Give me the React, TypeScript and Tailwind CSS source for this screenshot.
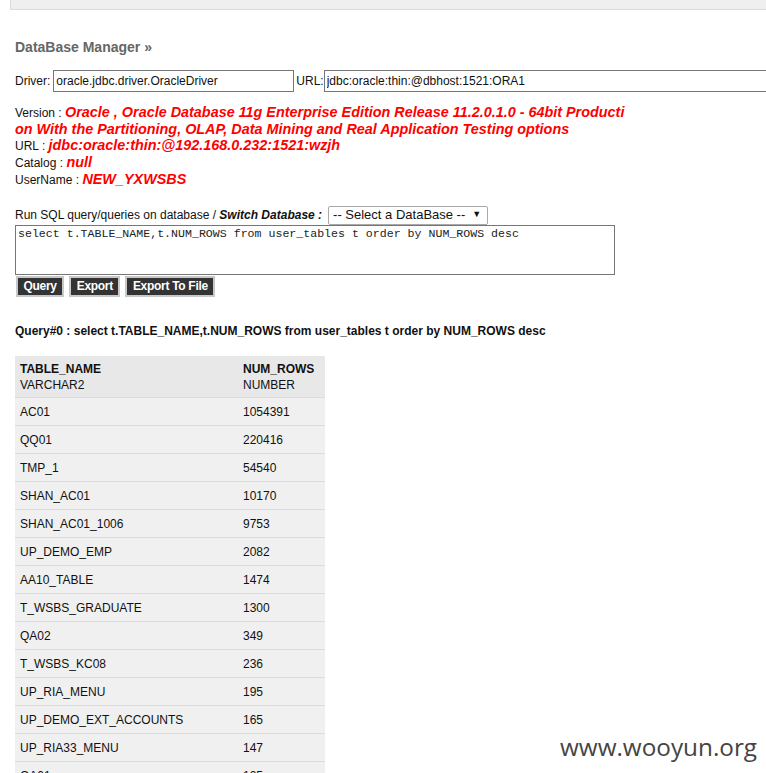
const ROWS: [string, string][] = [
  ["AC01", "1054391"],
  ["QQ01", "220416"],
  ["TMP_1", "54540"],
  ["SHAN_AC01", "10170"],
  ["SHAN_AC01_1006", "9753"],
  ["UP_DEMO_EMP", "2082"],
  ["AA10_TABLE", "1474"],
  ["T_WSBS_GRADUATE", "1300"],
  ["QA02", "349"],
  ["T_WSBS_KC08", "236"],
  ["UP_RIA_MENU", "195"],
  ["UP_DEMO_EXT_ACCOUNTS", "165"],
  ["UP_RIA33_MENU", "147"],
  ["QA01", "125"],
];

const SQL =
  "select t.TABLE_NAME,t.NUM_ROWS from user_tables t order by NUM_ROWS desc";

function ActionButton({ label }: { label: string }) {
  return (
    <button className="h-[21px] border-2 border-[#c8c8c8] bg-[#333] px-[5.5px] text-[12px] font-bold leading-none tracking-[-0.3px] text-white">
      {label}
    </button>
  );
}

function InfoLine({ label, value }: { label: string; value: React.ReactNode }) {
  return (
    <div className="leading-[16.7px]">
      {label} :{" "}
      <span className="text-[14.4px] font-bold italic leading-[14px] text-[#ff0000]">{value}</span>
    </div>
  );
}

export default function App() {
  return (
    <div className="relative h-[773px] w-[766px] overflow-hidden bg-white font-['Liberation_Sans',Arial,sans-serif] text-[12px] text-[#111]">
      {/* top bar */}
      <div className="ml-[10px] h-[10px] border-b border-l border-[#dcdcdc] bg-[#efefef]" />

      <div className="pl-[15px]">
        <h2 className="mt-[27px] text-[14px] font-bold text-[#666]">DataBase Manager »</h2>

        {/* driver / url */}
        <div className="mt-[12px] flex items-center whitespace-nowrap">
          <span>Driver:</span>
          <input
            readOnly
            value="oracle.jdbc.driver.OracleDriver"
            className="ml-[3px] h-[22px] w-[241px] shrink-0 border border-[#767676] px-[2px] text-[12px] outline-none"
          />
          <span className="ml-[2px]">URL:</span>
          <input
            readOnly
            value="jdbc:oracle:thin:@dbhost:1521:ORA1"
            className="h-[22px] w-[460px] shrink-0 border border-[#767676] px-[2px] text-[12px] outline-none"
          />
        </div>

        {/* connection info */}
        <div className="mt-[13px]">
          <InfoLine
            label="Version"
            value={
              <>
                Oracle , Oracle Database 11g Enterprise Edition Release 11.2.0.1.0 - 64bit Producti
                <br />
                on With the Partitioning, OLAP, Data Mining and Real Application Testing options
              </>
            }
          />
          <InfoLine label="URL" value="jdbc:oracle:thin:@192.168.0.232:1521:wzjh" />
          <InfoLine label="Catalog" value="null" />
          <InfoLine label="UserName" value="NEW_YXWSBS" />
        </div>

        {/* query form */}
        <div className="mt-[17px] flex h-[19px] items-center">
          <span>
            Run SQL query/queries on database / <b className="italic">Switch Database :</b>
          </span>
          <div className="ml-[6px] flex h-[19px] w-[160px] items-center justify-between rounded-[2px] border border-[#a9a9a9] bg-white pl-[4px] pr-[6px] text-[13px]">
            <span>-- Select a DataBase --</span>
            <span className="text-[9px]">▼</span>
          </div>
        </div>
        <textarea
          readOnly
          value={SQL}
          className="block h-[50px] w-[600px] resize-none border border-[#767676] px-[2px] py-[1px] font-['Liberation_Mono','Courier_New',monospace] text-[11.6px] leading-[14px] text-[#222] outline-none"
        />
        <div className="mt-[1px] flex gap-[5px] pl-[1px]">
          <ActionButton label="Query" />
          <ActionButton label="Export" />
          <ActionButton label="Export To File" />
        </div>

        <p className="mt-[25px] font-bold">Query#0 : {SQL}</p>

        {/* result table */}
        <table className="mt-[16px] w-[310px] border-collapse">
          <thead>
            <tr className="h-[42px] bg-[#e8e8e8] text-left align-top">
              <th className="w-[228px] px-[5px] pt-[5px] leading-[16px]">
                <div className="font-bold">TABLE_NAME</div>
                <div className="font-normal">VARCHAR2</div>
              </th>
              <th className="pt-[5px] leading-[16px]">
                <div className="font-bold">NUM_ROWS</div>
                <div className="font-normal">NUMBER</div>
              </th>
            </tr>
          </thead>
          <tbody>
            {ROWS.map(([name, rows]) => (
              <tr key={name} className="h-[28px] border-t border-[#dcdcdc] bg-[#f0f0f0]">
                <td className="px-[5px]">{name}</td>
                <td>{rows}</td>
              </tr>
            ))}
          </tbody>
        </table>
      </div>

      {/* watermark */}
      <div className="absolute left-[560px] top-[729px] font-['Open_Sans',sans-serif] text-[24.3px] text-[#444]">
        www.wooyun.org
      </div>
    </div>
  );
}
